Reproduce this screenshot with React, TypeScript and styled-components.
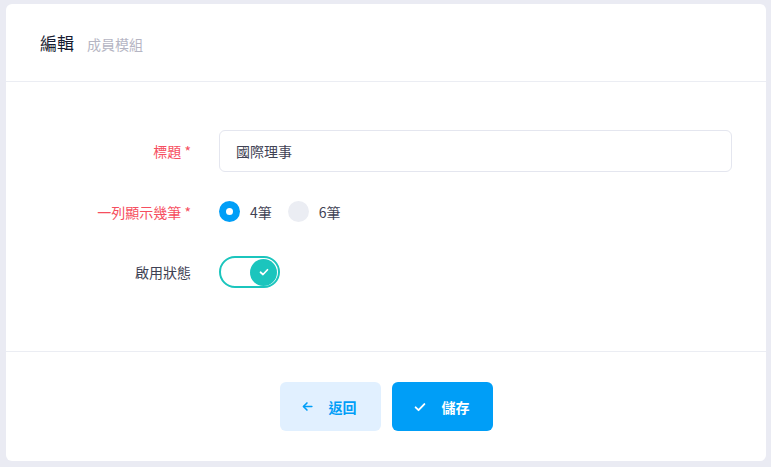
import React from 'react';
import styled, { createGlobalStyle } from 'styled-components';

const GlobalStyle = createGlobalStyle`
  body {
    margin: 0;
    background-color: #eaebf3;
    font-family: "Noto Sans CJK TC", "Noto Sans", sans-serif;
  }
`;

const App = () => {
  return (
    <>
      <GlobalStyle />
      <Page>
        <Card>
          <CardHeader>
            <CardTitle>編輯</CardTitle>
            <CardSubTitle>成員模組</CardSubTitle>
          </CardHeader>

          <FormBody>
            <FieldLabel required>標題 *</FieldLabel>
            <FieldControl>
              <TextInput defaultValue="國際理事" />
            </FieldControl>

            <FieldLabel required>一列顯示幾筆 *</FieldLabel>
            <FieldControl>
              {PER_ROW_OPTIONS.map(({ id, label, checked }) => {
                return (
                  <RadioOption key={id}>
                    <RadioDot checked={checked} />
                    {label}
                  </RadioOption>
                );
              })}
            </FieldControl>

            <FieldLabel>啟用狀態</FieldLabel>
            <FieldControl>
              <SwitchTrack>
                <SwitchKnob>
                  <svg width="12" height="12" viewBox="0 0 24 24" fill="none" stroke="#fff" strokeWidth="3.4" strokeLinecap="round" strokeLinejoin="round">
                    <polyline points="5 12.5 10 17 19 7.5" />
                  </svg>
                </SwitchKnob>
              </SwitchTrack>
            </FieldControl>
          </FormBody>

          <CardFooter>
            <BackButton>
              <svg width="13" height="13" viewBox="0 0 24 24" fill="none" stroke="currentColor" strokeWidth="3" strokeLinecap="round" strokeLinejoin="round">
                <line x1="20" y1="12" x2="5" y2="12" />
                <polyline points="11 5.5 4.5 12 11 18.5" />
              </svg>
              返回
            </BackButton>
            <SaveButton>
              <svg width="14" height="14" viewBox="0 0 24 24" fill="none" stroke="currentColor" strokeWidth="3.2" strokeLinecap="round" strokeLinejoin="round">
                <polyline points="4.5 12.5 9.5 17.5 19.5 7" />
              </svg>
              儲存
            </SaveButton>
          </CardFooter>
        </Card>
      </Page>
    </>
  );
};

const PER_ROW_OPTIONS = [
  { id: 1, label: '4筆', checked: true },
  { id: 2, label: '6筆', checked: false },
];

const Page = styled.div`
  padding: 4px 5px 6px 6px;
`;

const Card = styled.div`
  display: flex;
  flex-direction: column;
  height: 457px;
  border-radius: 6px;
  background-color: #fff;
  box-sizing: border-box;
`;

const CardHeader = styled.div`
  display: flex;
  align-items: baseline;
  height: 78px;
  padding: 0 34px;
  padding-top: 26px;
  box-sizing: border-box;
  border-bottom: 1px solid #ebedf3;
`;

const CardTitle = styled.h3`
  margin: 0;
  font-size: 17px;
  font-weight: 400;
  color: #181c32;
`;

const CardSubTitle = styled.span`
  margin-left: 13px;
  font-size: 14px;
  color: #b5b5c3;
`;

const FormBody = styled.div`
  display: grid;
  grid-template-columns: 185px 1fr;
  grid-auto-rows: 42px;
  column-gap: 28px;
  row-gap: 18.5px;
  align-items: center;
  padding: 48px 34px 0 0;
  height: 270px;
  box-sizing: border-box;
  border-bottom: 1px solid #ebedf3;
`;

const FieldLabel = styled.label<{ required?: boolean }>`
  justify-self: end;
  font-size: 14px;
  color: ${props => (props.required ? '#f64e60' : '#3f4254')};
`;

const FieldControl = styled.div`
  display: flex;
  align-items: center;
  gap: 12px;
  height: 100%;
`;

const TextInput = styled.input`
  width: 100%;
  height: 42px;
  padding: 0 16px;
  box-sizing: border-box;
  border: 1px solid #e4e6ef;
  border-radius: 6px;
  font-family: inherit;
  font-size: 14px;
  color: #3f4254;
  outline: none;
`;

const RadioOption = styled.label`
  display: flex;
  align-items: center;
  gap: 10px;
  margin-right: 4px;
  font-size: 14px;
  color: #3f4254;
`;

const RadioDot = styled.span<{ checked: boolean }>`
  display: flex;
  justify-content: center;
  align-items: center;
  width: 21px;
  height: 21px;
  border-radius: 50%;
  background-color: ${props => (props.checked ? '#009ef7' : '#ebedf3')};

  &::after {
    content: '';
    display: ${props => (props.checked ? 'block' : 'none')};
    width: 7px;
    height: 7px;
    border-radius: 50%;
    background-color: #fff;
  }
`;

const SwitchTrack = styled.span`
  display: flex;
  justify-content: flex-end;
  align-items: center;
  width: 61px;
  height: 32px;
  padding: 0 1px;
  box-sizing: border-box;
  border: 2px solid #1bc5bd;
  border-radius: 16px;
`;

const SwitchKnob = styled.span`
  display: flex;
  justify-content: center;
  align-items: center;
  width: 27px;
  height: 27px;
  border-radius: 50%;
  background-color: #1bc5bd;
`;

const CardFooter = styled.div`
  display: flex;
  justify-content: center;
  gap: 11px;
  padding-top: 30px;
`;

const BaseButton = styled.button`
  display: flex;
  align-items: center;
  gap: 15px;
  width: 101px;
  height: 49px;
  padding: 0 0 0 21px;
  border: none;
  border-radius: 6px;
  font-family: inherit;
  font-size: 14px;
  font-weight: 700;
`;

const BackButton = styled(BaseButton)`
  background-color: #e1f0ff;
  color: #009ef7;
`;

const SaveButton = styled(BaseButton)`
  background-color: #009ef7;
  color: #fff;
`;

export default App;
